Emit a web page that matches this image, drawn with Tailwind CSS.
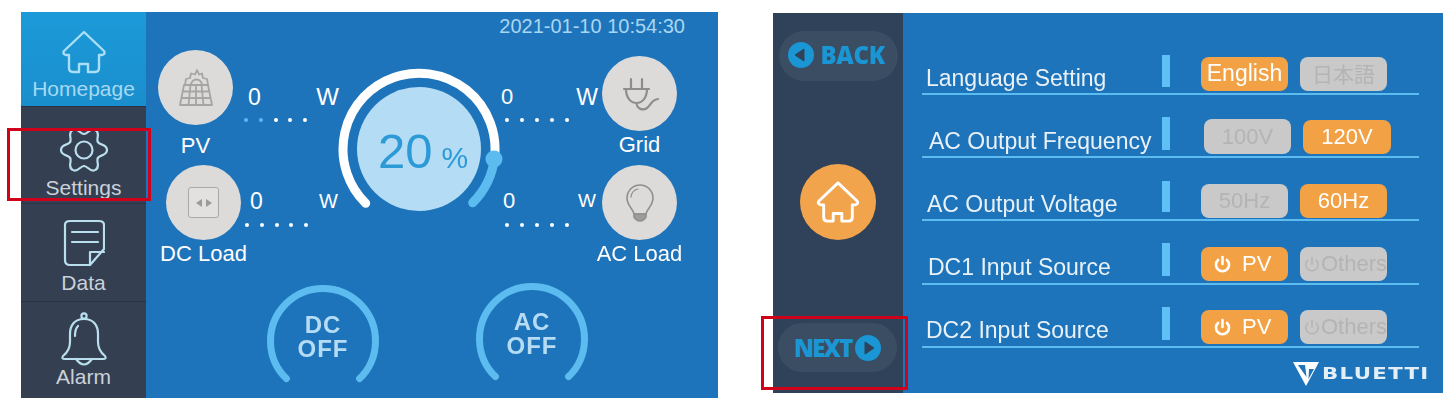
<!DOCTYPE html>
<html lang="en">
<head>
    <meta charset="UTF-8">
    <meta name="viewport" content="width=device-width, initial-scale=1.0">
    <title>Power station screens</title>
    <script src="https://cdn.jsdelivr.net/npm/@tailwindcss/browser@4"></script>
</head>
<body class="bg-white font-['Liberation_Sans',sans-serif]">
<div class="relative flex w-[1451px] h-[408px] overflow-hidden blur-[0.5px]">

    <!-- home screen -->
    <section class="flex ml-[21px] mt-[12px] w-[697px] h-[386px] bg-[#1e74bb] text-white">
        <nav class="w-[125px] flex flex-col bg-[#353f52] text-[21px] leading-6 text-[#c9d2d9]">
            <div class="h-[95px] flex flex-col items-center pt-[18px] bg-gradient-to-b from-[#1c9ad8] to-[#1a8ecd] text-[#a5d9f3] border-b border-[#2a3242]">
                <svg class="w-[46px] h-[44px]" viewBox="0 0 46 44" fill="none" stroke="#a9def6" stroke-width="2.4" stroke-linejoin="round"><path d="M23 2 L3 21 Q1 24 5 25 L8 25 V38 Q8 42 12 42 H18 V34 H27 V42 H34 Q38 42 38 38 V25 L41 25 Q45 24 43 21 Z"/></svg>
                <span class="mt-[3px]">Homepage</span>
            </div>
            <div class="h-[97px] flex flex-col items-center pt-[20px] border-b border-[#2e3748]">
                <svg class="w-[48px] h-[46px]" viewBox="-24 -23 48 46" fill="none" stroke="#b9dfee" stroke-width="2.2" stroke-linecap="round">
                    <path d="M13.86 -8 C15.86 -4.54 23 -6 23 0 C23 6 15.86 4.54 13.86 8"/>
                    <path transform="rotate(60)" d="M13.86 -8 C15.86 -4.54 23 -6 23 0 C23 6 15.86 4.54 13.86 8"/>
                    <path transform="rotate(120)" d="M13.86 -8 C15.86 -4.54 23 -6 23 0 C23 6 15.86 4.54 13.86 8"/>
                    <path transform="rotate(180)" d="M13.86 -8 C15.86 -4.54 23 -6 23 0 C23 6 15.86 4.54 13.86 8"/>
                    <path transform="rotate(240)" d="M13.86 -8 C15.86 -4.54 23 -6 23 0 C23 6 15.86 4.54 13.86 8"/>
                    <path transform="rotate(300)" d="M13.86 -8 C15.86 -4.54 23 -6 23 0 C23 6 15.86 4.54 13.86 8"/>
                    <circle r="8.5"/>
                </svg>
                <span class="mt-[3px]">Settings</span>
            </div>
            <div class="h-[98px] flex flex-col items-center pt-[15px] border-b border-[#2a3242]">
                <svg class="w-[42px] h-[48px]" viewBox="0 0 42 48" fill="none" stroke="#b9dfee" stroke-width="2.2" stroke-linejoin="round" stroke-linecap="round"><path d="M27 46 H7 Q2 46 2 41 V6 Q2 2 7 2 H36 Q41 2 41 6 V30 L27 46 V33 H41"/><path d="M9 13 H35 M9 23 H35"/></svg>
                <span class="mt-[4px]">Data</span>
            </div>
            <div class="h-[96px] flex flex-col items-center pt-[10px]">
                <svg class="w-[48px] h-[54px]" viewBox="0 0 48 54" fill="none" stroke="#b9dfee" stroke-width="2.2" stroke-linejoin="round" stroke-linecap="round"><circle cx="24" cy="4" r="2.6"/><path d="M24 7 C14 7 10 14 10 22 V30 C10 36 8 40 3 44 Q1 47 5 47 H43 Q47 47 45 44 C40 40 38 36 38 30 V22 C38 14 34 7 24 7 Z"/><path d="M16 47 Q24 58 32 47"/><path d="M15 24 Q15 17 18 14"/></svg>
                <span class="mt-[-1px]">Alarm</span>
            </div>
        </nav>

        <div class="flex-1 flex flex-col">
            <div class="h-[38px] pr-[33px] pt-[3px] text-right text-[20px] leading-[22px] text-[#a9d6f0]">2021-01-10 10:54:30</div>

            <div class="h-[230px] flex text-[22px] leading-6">
                <!-- PV and DC load -->
                <div class="w-[194px] flex flex-col">
                    <div class="h-[115px] flex">
                        <div class="ml-[12px] w-[75px] flex flex-col items-center">
                            <div class="w-[75px] h-[75px] shrink-0 rounded-full bg-[#dcdbd9] flex items-center justify-center">
                                <svg class="w-[40px] h-[40px]" viewBox="0 0 40 40" fill="none" stroke="#a5a5a3" stroke-width="1.8" stroke-linejoin="round"><path d="M8 17 H32 L36 37 H4 Z M6.500 23.500 H33.500 M5 30 H35 M14.500 17 L12.500 37 M20 17 V37 M25.500 17 L27.500 37"/><path d="M9 17 L10 11 L14 10 L15 5.500 L19 6.500 L21 2 L23 6.500 L26 5.500 L27 10 L31 11 L32 17 M15 17 A5.500 5.500 0 0 1 26 17"/></svg>
                            </div>
                            <span class="mt-[9px]">PV</span>
                        </div>
                        <div class="ml-[15px] mt-[35px] w-[91px]">
                            <div class="flex justify-between text-[23px]"><span>0</span><span class="text-[24px]">W</span></div>
                            <div class="-ml-[4px] mt-[9px] flex gap-[10.75px]">
                                <i class="w-[4px] h-[4px] rounded-full bg-[#5cb8ef]"></i><i class="w-[4px] h-[4px] rounded-full bg-[#5cb8ef]"></i><i class="w-[4px] h-[4px] rounded-full bg-white"></i><i class="w-[4px] h-[4px] rounded-full bg-white"></i><i class="w-[4px] h-[4px] rounded-full bg-white"></i>
                            </div>
                        </div>
                    </div>
                    <div class="flex">
                        <div class="ml-[20px] w-[75px] flex flex-col items-center">
                            <div class="w-[75px] h-[75px] shrink-0 rounded-full bg-[#dcdbd9] flex items-center justify-center">
                                <div class="w-[31px] h-[31px] rounded-[3px] border-[1.5px] border-[#a8a8a6] bg-[#e2e1df] flex items-center justify-center gap-[4px]">
                                    <i class="border-y-[4px] border-r-[6px] border-y-transparent border-r-[#9a9a98]"></i><i class="border-y-[4px] border-l-[6px] border-y-transparent border-l-[#9a9a98]"></i>
                                </div>
                            </div>
                            <span class="mt-[2px] whitespace-nowrap">DC Load</span>
                        </div>
                        <div class="ml-[9px] mt-[24px] w-[88px]">
                            <div class="flex justify-between text-[23px]"><span>0</span><span class="text-[20px]">W</span></div>
                            <div class="-ml-[5px] mt-[10px] flex gap-[10.75px]">
                                <i class="w-[4px] h-[4px] rounded-full bg-white"></i><i class="w-[4px] h-[4px] rounded-full bg-white"></i><i class="w-[4px] h-[4px] rounded-full bg-white"></i><i class="w-[4px] h-[4px] rounded-full bg-white"></i><i class="w-[4px] h-[4px] rounded-full bg-white"></i>
                            </div>
                        </div>
                    </div>
                </div>

                <!-- battery gauge -->
                <div class="relative w-[160px] shrink-0">
                    <svg class="absolute inset-0 overflow-visible" width="160" height="180" fill="none" stroke-linecap="round">
                        <path d="M25.7 153.3 A76 76 0 1 1 154.5 108.1" stroke="#ffffff" stroke-width="9"/>
                        <path d="M154.5 108.1 A76 76 0 0 1 132.7 152.7" stroke="#5cbcf0" stroke-width="9"/>
                        <circle cx="154" cy="109" r="8.5" fill="#5cbcf0"/>
                    </svg>
                    <div class="relative ml-[17px] mt-[37px] w-[124px] h-[124px] rounded-full bg-[#b5dcf5] flex items-baseline justify-center pl-[8px] pt-[34px] text-[#2c9ad6]">
                        <span class="text-[49px] leading-[60px]">20</span><span class="ml-[9px] text-[30px] leading-[60px]">%</span>
                    </div>
                </div>

                <!-- grid and AC load -->
                <div class="flex-1 flex flex-col">
                    <div class="h-[115px] flex">
                        <div class="mt-[35px] w-[102px]">
                            <div class="flex justify-between text-[22px] pl-[1px] pr-[4px]"><span>0</span><span class="text-[23px]">W</span></div>
                            <div class="ml-[5px] mt-[9px] flex gap-[11px]">
                                <i class="w-[4px] h-[4px] rounded-full bg-white"></i><i class="w-[4px] h-[4px] rounded-full bg-white"></i><i class="w-[4px] h-[4px] rounded-full bg-white"></i><i class="w-[4px] h-[4px] rounded-full bg-white"></i><i class="w-[4px] h-[4px] rounded-full bg-white"></i>
                            </div>
                        </div>
                        <div class="w-[75px] flex flex-col items-center">
                            <div class="mt-[6px] w-[75px] h-[75px] shrink-0 rounded-full bg-[#dcdbd9] flex items-center justify-center">
                                <svg class="w-[38px] h-[36px]" viewBox="0 0 38 36" fill="none" stroke="#8d8d8b" stroke-width="2.2" stroke-linecap="round"><path d="M10 3 V13 M21 3 V13 M3 13 H28 M5 13 C5 22 10 27 15.500 27 C21 27 26 22 26 13 M15.500 27 C16 33 22 35 26 32 C30 29 30 24 37 23"/></svg>
                            </div>
                            <span class="mt-[2px]">Grid</span>
                        </div>
                    </div>
                    <div class="flex">
                        <div class="mt-[24px] w-[102px]">
                            <div class="flex justify-between text-[22px] pl-[3px] pr-[6px]"><span>0</span><span class="text-[19px]">W</span></div>
                            <div class="ml-[5px] mt-[10px] flex gap-[11px]">
                                <i class="w-[4px] h-[4px] rounded-full bg-white"></i><i class="w-[4px] h-[4px] rounded-full bg-white"></i><i class="w-[4px] h-[4px] rounded-full bg-white"></i><i class="w-[4px] h-[4px] rounded-full bg-white"></i><i class="w-[4px] h-[4px] rounded-full bg-white"></i>
                            </div>
                        </div>
                        <div class="w-[75px] flex flex-col items-center">
                            <div class="w-[75px] h-[75px] shrink-0 rounded-full bg-[#dcdbd9] flex items-center justify-center">
                                <svg class="w-[30px] h-[38px]" viewBox="0 0 30 38" fill="none" stroke="#8f8f8d" stroke-width="1.6" stroke-linecap="round"><path d="M9 30 C8 24 2 22 2 14 A13 13 0 0 1 28 14 C28 22 22 24 21 30 Z"/><path d="M6 13 A9 9 0 0 1 13 5" stroke-width="1.2"/><path d="M9 30 H21 V33 Q19 37 15 37 Q11 37 9 33 Z" fill="#9c9c9a"/></svg>
                            </div>
                            <span class="mt-[2px] whitespace-nowrap">AC Load</span>
                        </div>
                    </div>
                </div>
            </div>

            <!-- output switches -->
            <div class="flex pl-[116px] gap-[87px] text-[24px] leading-6 font-bold text-[#b6dcf3] tracking-[1px]">
                <div class="relative w-[122px] h-[110px] pt-[33px] text-center">
                    <svg class="absolute inset-0" width="122" height="110" fill="none" stroke="#5cbcf0" stroke-width="7" stroke-linecap="round"><path d="M24.4 98.6 A52.5 52.5 0 1 1 97.6 98.6"/></svg>
                    <div>DC</div><div>OFF</div>
                </div>
                <div class="relative w-[122px] h-[110px] pt-[30px] text-center">
                    <svg class="absolute inset-0" width="122" height="110" fill="none" stroke="#5cbcf0" stroke-width="7" stroke-linecap="round"><path d="M24.4 96.6 A52.5 52.5 0 1 1 97.6 96.6"/></svg>
                    <div>AC</div><div>OFF</div>
                </div>
            </div>
        </div>
    </section>

    <!-- settings screen -->
    <section class="flex ml-[55px] mt-[13px] w-[670px] h-[380px] bg-[#1e74bb]">
        <aside class="w-[130px] bg-[#30425a] flex flex-col items-center pt-[18px] font-['Open_Sans',sans-serif] font-extrabold text-[#1a96d4]">
            <div class="w-[119px] h-[50px] rounded-full bg-[#3a4d63] flex items-center pl-[9px] gap-[7px] text-[24px] tracking-[-0.3px]">
                <svg class="w-[26px] h-[26px] shrink-0 -mt-[2px]" viewBox="0 0 26 26"><circle cx="13" cy="13" r="13" fill="#1a96d4"/><path d="M7 13 L16 7 V19 Z" fill="#30425a" stroke="#30425a" stroke-linejoin="round"/></svg>
                <span class="pb-[3px]">BACK</span>
            </div>
            <div class="mt-[83px] w-[76px] h-[76px] rounded-full bg-[#f2a44c] flex items-center justify-center">
                <svg class="w-[44px] h-[42px]" viewBox="0 0 46 44" fill="none" stroke="#ffffff" stroke-width="3" stroke-linejoin="round"><path d="M23 2 L3 21 Q1 24 5 25 L8 25 V38 Q8 42 12 42 H18 V34 H27 V42 H34 Q38 42 38 38 V25 L41 25 Q45 24 43 21 Z"/></svg>
            </div>
            <div class="mt-[83px] -ml-[1px] w-[119px] h-[49px] rounded-full bg-[#3a4d63] flex items-center pl-[16px] gap-[3px] text-[24px] tracking-[-1.8px]">
                <span>NEXT</span>
                <svg class="w-[26px] h-[26px] shrink-0" viewBox="0 0 26 26"><circle cx="13" cy="13" r="13" fill="#1a96d4"/><path d="M19 13 L10 7 V19 Z" fill="#30425a" stroke="#30425a" stroke-linejoin="round"/></svg>
            </div>
        </aside>

        <div class="flex-1 pl-[19px] pt-[19px] text-[23px] leading-7 text-[#e9f1f7]">
            <div class="w-[497px] h-[63px] flex items-end border-b-[2px] border-[#5cbcf0]">
                <span class="w-[240px] pl-[4px] pb-[1px]">Language Setting</span>
                <i class="w-[8px] h-[32px] mb-[6px] bg-[#5ec0f5]"></i>
                <span class="ml-[31px] mb-[2px] w-[87px] h-[34px] rounded-[8px] bg-[#f2a144] text-white text-center leading-[33px]">English</span>
                <span class="ml-[12px] mb-[2px] w-[87px] h-[34px] rounded-[8px] bg-[#c9c9c9] text-[#b4b4b4] text-center text-[21px] leading-[33px] font-['Noto_Sans_CJK_JP',sans-serif]">日本語</span>
            </div>
            <div class="w-[497px] h-[63px] flex items-end border-b-[2px] border-[#5cbcf0]">
                <span class="w-[240px] pl-[7px] pb-[1px]">AC Output Frequency</span>
                <i class="w-[8px] h-[33px] mb-[6px] bg-[#5ec0f5]"></i>
                <span class="ml-[34px] mb-[2px] w-[87px] h-[35px] rounded-[8px] bg-[#c9c9c9] text-[#b4b4b4] text-center text-[22px] leading-[35px]">100V</span>
                <span class="ml-[12px] mb-[2px] w-[88px] h-[34px] rounded-[8px] bg-[#f2a144] text-white text-center text-[22px] leading-[34px]">120V</span>
            </div>
            <div class="w-[497px] h-[63px] flex items-end border-b-[2px] border-[#5cbcf0]">
                <span class="w-[240px] pl-[5px] pb-[1px]">AC Output Voltage</span>
                <i class="w-[8px] h-[31px] mb-[7px] bg-[#5ec0f5]"></i>
                <span class="ml-[31px] mb-[1px] w-[87px] h-[34px] rounded-[8px] bg-[#c9c9c9] text-[#b4b4b4] text-center text-[22px] leading-[34px]">50Hz</span>
                <span class="ml-[12px] mb-[1px] w-[87px] h-[34px] rounded-[8px] bg-[#f2a144] text-white text-center text-[22px] leading-[34px]">60Hz</span>
            </div>
            <div class="w-[497px] h-[64px] flex items-end border-b-[2px] border-[#5cbcf0]">
                <span class="w-[240px] pl-[6px] pb-[2px]">DC1 Input Source</span>
                <i class="w-[8px] h-[33px] mb-[7px] bg-[#5ec0f5]"></i>
                <span class="ml-[31px] mb-[2px] w-[87px] h-[34px] rounded-[8px] bg-[#f2a144] text-white flex items-center pl-[13px] gap-[11px] text-[22px]">
                    <svg class="w-[17px] h-[18px] shrink-0" viewBox="0 0 17 18" fill="none" stroke="#ffffff" stroke-width="2.6" stroke-linecap="round"><path d="M8.5 2 V9 M4 5 A6.5 6.5 0 1 0 13 5"/></svg><span>PV</span>
                </span>
                <span class="ml-[12px] mb-[2px] w-[87px] h-[34px] rounded-[8px] bg-[#c9c9c9] text-[#b4b4b4] flex items-center pl-[4px] gap-[1px] text-[22px] overflow-hidden">
                    <svg class="w-[16px] h-[18px] shrink-0" viewBox="0 0 17 18" fill="none" stroke="#b4b4b4" stroke-width="1.6" stroke-linecap="round"><path d="M8.5 2 V9 M4 5 A6.5 6.5 0 1 0 13 5"/></svg><span>Others</span>
                </span>
            </div>
            <div class="w-[497px] h-[63px] flex items-end border-b-[2px] border-[#5cbcf0]">
                <span class="w-[240px] pl-[4px] pb-[2px]">DC2 Input Source</span>
                <i class="w-[8px] h-[33px] mb-[6px] bg-[#5ec0f5]"></i>
                <span class="ml-[31px] mb-[2px] w-[87px] h-[34px] rounded-[8px] bg-[#f2a144] text-white flex items-center pl-[13px] gap-[11px] text-[22px]">
                    <svg class="w-[17px] h-[18px] shrink-0" viewBox="0 0 17 18" fill="none" stroke="#ffffff" stroke-width="2.6" stroke-linecap="round"><path d="M8.5 2 V9 M4 5 A6.5 6.5 0 1 0 13 5"/></svg><span>PV</span>
                </span>
                <span class="ml-[12px] mb-[2px] w-[87px] h-[34px] rounded-[8px] bg-[#c9c9c9] text-[#b4b4b4] flex items-center pl-[4px] gap-[1px] text-[22px] overflow-hidden">
                    <svg class="w-[16px] h-[18px] shrink-0" viewBox="0 0 17 18" fill="none" stroke="#b4b4b4" stroke-width="1.6" stroke-linecap="round"><path d="M8.5 2 V9 M4 5 A6.5 6.5 0 1 0 13 5"/></svg><span>Others</span>
                </span>
            </div>
            <div class="mt-[14px] ml-[371px] flex items-center gap-[3px]">
                <svg class="w-[26px] h-[24px] shrink-0" viewBox="0 0 26 24"><path d="M0 0 H26 L13 24 Z" fill="#ffffff"/><path d="M5 3 H12 L13.500 15 Z M16 7 H21 L15.500 17 Z" fill="#1e74bb"/></svg>
                <span class="origin-left scale-x-[1.33] text-[16px] leading-5 font-bold tracking-[1px] text-[#e3eef7] font-['DejaVu_Sans',sans-serif]">BLUETTI</span>
            </div>
        </div>
    </section>

    <!-- callouts drawn over the screens -->
    <div class="absolute left-[7px] top-[128px] w-[144px] h-[73px] border-[3px] border-[#d0021b]"></div>
    <div class="absolute left-[761px] top-[316px] w-[147px] h-[74px] border-[3px] border-[#d0021b]"></div>
</div>
</body>
</html>
